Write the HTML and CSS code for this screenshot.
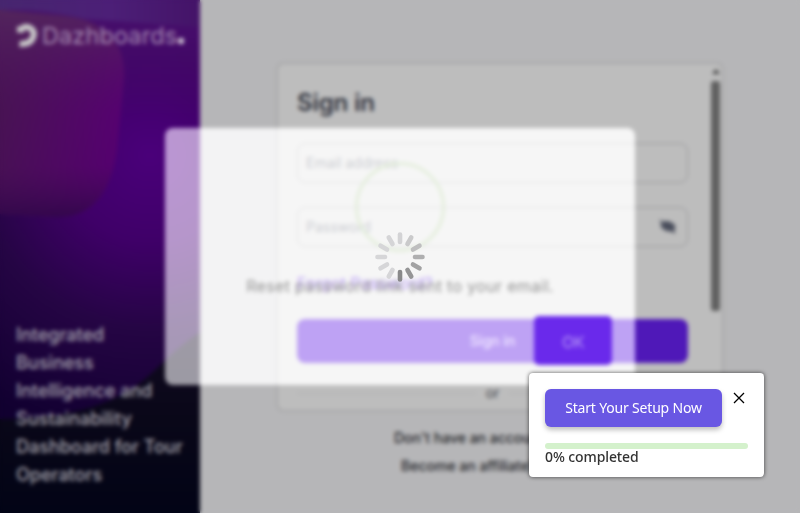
FILE: index.html
```html
<!DOCTYPE html>
<html lang="en">
<head>
<meta charset="utf-8">
<title>Dazhboards</title>
<link rel="stylesheet" href="styles.css">
</head>
<body>
<div class="page">
  <aside class="sidebar">
    <svg class="art" viewBox="0 0 200 513" preserveAspectRatio="none" aria-hidden="true">
      <defs>
        <radialGradient id="glow" gradientUnits="userSpaceOnUse" cx="150" cy="155" r="290">
          <stop offset="0" stop-color="#4a007a"/>
          <stop offset=".3" stop-color="#3f0068"/>
          <stop offset=".6" stop-color="#250544"/>
          <stop offset="1" stop-color="#110030"/>
        </radialGradient>
        <linearGradient id="top" x1="0" y1="0" x2="1" y2="0">
          <stop offset="0" stop-color="#47266f"/><stop offset=".55" stop-color="#4c1f77"/><stop offset="1" stop-color="#441368"/>
        </linearGradient>
        <linearGradient id="topfade" x1="0" y1="0" x2="0" y2="1">
          <stop offset="0" stop-color="#47106c"/><stop offset=".3" stop-color="#450c6a"/><stop offset="1" stop-color="#450868" stop-opacity="0"/>
        </linearGradient>
        <linearGradient id="blob" gradientUnits="userSpaceOnUse" x1="0" y1="90" x2="120" y2="130">
          <stop offset="0" stop-color="#46154f"/><stop offset="1" stop-color="#570072"/>
        </linearGradient>
        <linearGradient id="shade" x1="0" y1="0" x2="0" y2="1">
          <stop offset="0" stop-color="#55285f" stop-opacity=".85"/><stop offset=".5" stop-color="#500b68" stop-opacity=".1"/><stop offset=".75" stop-color="#400c50" stop-opacity=".15"/><stop offset="1" stop-color="#2f0748" stop-opacity=".9"/>
        </linearGradient>
        <linearGradient id="floor" x1="0" y1="0" x2="0" y2="1">
          <stop offset="0" stop-color="#110a20"/><stop offset=".5" stop-color="#090718"/><stop offset="1" stop-color="#020416"/>
        </linearGradient>
      </defs>
      <rect width="200" height="513" fill="url(#glow)"/>
      <rect width="200" height="120" fill="url(#topfade)"/>
      <path d="M0 0H200V27Q130 22 85 19Q40 8 0 10Z" fill="url(#top)"/>
      <path d="M0 10L65 16Q126 24 124 78L117 150Q107 219 55 217L0 214Z" fill="url(#blob)"/>
      <path d="M0 10L65 16Q126 24 124 78L117 150Q107 219 55 217L0 214Z" fill="url(#shade)"/>
      <path d="M0 419Q105 420 155 370Q180 345 200 332V513H0Z" fill="url(#floor)"/>
    </svg>
    <div class="brand">
      <svg class="mark" viewBox="0 0 22 24"><path d="M1 5.500H8" /><path d="M6 4C14 0.500 19.500 7 17.200 13C15.500 18.500 10 20.300 3.500 20"/></svg>
      <span class="name">Dazhboards</span><span class="dot"></span>
    </div>
    <p class="pitch">Integrated<br>Business<br>Intelligence and<br>Sustainability<br>Dashboard for Tour<br>Operators</p>
  </aside>
  <main class="main">
    <section class="card">
      <form class="form">
        <h1>Sign in</h1>
        <div class="field"><span>Email address</span></div>
        <div class="field"><span>Password</span>
          <svg class="eye" viewBox="0 0 18 16"><path d="M3 4Q10 0 17 7L16 12Q8 15 2 8Z"/><path class="slash" d="M1 1.500L17 15"/></svg>
        </div>
        <a class="forgot">Forgot Password?</a>
        <div class="submit">Sign in</div>
        <div class="or"><i></i><span>or</span><i></i></div>
      </form>
      <div class="scroll"><b></b><i></i></div>
    </section>
    <div class="links"><p>Don't have an account?</p><p class="second">Become an affiliate?</p></div>
  </main>
</div>
<div class="layer">
  <div class="dialog">
    <div class="ring"></div>
    <p class="message">Reset password link sent to your email.</p>
    <div class="ok">OK</div>
  </div>
</div>
<div class="veil"></div>
<div class="layer">
  <svg class="spinner" viewBox="-25 -25 50 50">
    <g stroke-width="4.600" stroke-linecap="round">
      <path d="M0-15V-22.500" stroke="#d3d3d5"/>
      <path d="M0-15V-22.500" stroke="#cacacb" transform="rotate(30)"/>
      <path d="M0-15V-22.500" stroke="#bebebf" transform="rotate(60)"/>
      <path d="M0-15V-22.500" stroke="#afafb0" transform="rotate(90)"/>
      <path d="M0-15V-22.500" stroke="#a2a2a3" transform="rotate(120)"/>
      <path d="M0-15V-22.500" stroke="#959596" transform="rotate(150)"/>
      <path d="M0-15V-22.500" stroke="#89898a" transform="rotate(180)"/>
      <path d="M0-15V-22.500" stroke="#d6d6d8" transform="rotate(210)"/>
      <path d="M0-15V-22.500" stroke="#d6d6d8" transform="rotate(240)"/>
      <path d="M0-15V-22.500" stroke="#d6d6d8" transform="rotate(270)"/>
      <path d="M0-15V-22.500" stroke="#d6d6d8" transform="rotate(300)"/>
      <path d="M0-15V-22.500" stroke="#d5d5d7" transform="rotate(330)"/>
    </g>
  </svg>
</div>
<div class="setup">
  <div class="row">
    <div class="start"><span>Start Your Setup Now</span></div>
    <svg class="close" viewBox="0 0 12 12"><path d="M1 1L11 11M11 1L1 11"/></svg>
  </div>
  <div class="bar"></div>
  <p class="done">0% completed</p>
</div>
</body>
</html>
```

FILE: styles.css
```css
* { box-sizing: border-box; }
body { margin: 0; width: 800px; height: 513px; overflow: hidden; font-family: Inter, sans-serif; }
p, h1 { margin: 0; }
.page { display: flex; height: 513px; background: #b6b6b8; }

.sidebar { position: relative; width: 200px; height: 513px; padding: 24px 0 24px 16px; display: flex; flex-direction: column; justify-content: space-between; overflow: hidden; }
.art { position: absolute; inset: 0; width: 200px; height: 513px; }
.brand { position: relative; display: flex; align-items: center; height: 24px; }
.mark { width: 22px; height: 24px; fill: none; stroke: #cacaca; stroke-width: 6; }
.name { margin-left: 4px; width: 136px; font-size: 23.500px; line-height: 24px; color: #a58bb2; letter-spacing: .1px; white-space: nowrap; }
.dot { width: 6px; height: 6px; border-radius: 2px; background: #cfc6d4; margin-top: 10px; }
.pitch { position: relative; font-size: 18px; line-height: 28px; font-weight: 500; color: #a9a6b0; white-space: nowrap; }

.main { flex: 1; padding: 62px 0 0 76px; }
.card { display: flex; width: 448px; height: 350px; border: 2px solid #a8a8aa; border-radius: 8px; background: #bdbdbd; }
.form { flex: 1; padding: 23px 21px 0 19px; display: flex; flex-direction: column; }
h1 { font-size: 24px; line-height: 32px; font-weight: 600; color: #2f323c; letter-spacing: -.1px; margin-bottom: 24px; }
.field { display: flex; align-items: center; justify-content: space-between; height: 40px; margin-bottom: 24px; padding: 0 11px 2px 8px; border: 1px solid #98989b; border-radius: 8px; font-size: 14px; color: #666a73; }
.eye { width: 17px; height: 15px; fill: #4a4e5c; stroke: #4a4e5c; }
.eye .slash { stroke-width: 2; }
.forgot { font-size: 16px; line-height: 20px; margin: 2px 0 26px; font-weight: 400; color: #4a14bc; }
.submit { display: flex; align-items: center; justify-content: center; height: 44px; padding-bottom: 1px; border-radius: 8px; background: #4f18b8; color: #b5a4d8; font-size: 14px; font-weight: 500; }
.or { display: flex; align-items: center; gap: 10px; margin-top: 20px; font-size: 14px; line-height: 20px; color: #44464c; }
.or i { flex: 1; height: 1px; background: #aeaeb0; }
.scroll { width: 13px; padding-top: 5px; display: flex; flex-direction: column; align-items: center; }
.scroll b { border: 4px solid transparent; border-top: 0; border-bottom: 5px solid #444; }
.scroll i { width: 9px; height: 230px; margin-top: 7px; border-radius: 3px; background: #606060; }
.links { margin: 16px 0 0 118px; font-size: 14px; line-height: 20px; font-weight: 500; color: #222327; white-space: nowrap; }
.second { margin: 8px 0 0 7px; }

.layer { position: absolute; inset: 0; display: flex; align-items: center; justify-content: center; }
.dialog { width: 470px; height: 257px; border-radius: 8px; background: rgba(255, 255, 255, .59); backdrop-filter: brightness(1.24); display: flex; flex-direction: column; align-items: center; }
.ring { width: 90px; height: 90px; margin-top: 34px; border: 3px solid #e4eedc; border-radius: 50%; }
.message { margin-top: 22px; font-size: 16px; line-height: 24px; letter-spacing: .33px; color: #929292; white-space: nowrap; }
.ok { align-self: flex-end; display: flex; align-items: center; justify-content: center; width: 78px; height: 49px; margin: 18px 23px 0 0; padding-top: 2px; border-radius: 5px; background: #6a29eb; color: #b89af6; font-size: 16px; letter-spacing: -.6px; }
.veil { position: absolute; inset: 0; backdrop-filter: blur(2px); }
.spinner { width: 50px; height: 50px; margin-top: 1px; }

.setup { position: absolute; left: 529px; top: 373px; width: 235px; height: 104px; padding: 16px; border-radius: 4px; background: #fff; box-shadow: 0 0 4px rgba(0, 0, 0, .65); font-family: "Noto Sans", sans-serif; }
.row { display: flex; justify-content: space-between; }
.start { display: flex; align-items: center; justify-content: center; width: 177px; height: 38px; padding-bottom: 1px; border-radius: 6px; background: #6957e3; color: #fff; font-size: 14px; letter-spacing: -.18px; white-space: nowrap; box-shadow: 0 3px 5px rgba(0, 0, 0, .25); }
.close { width: 12px; height: 12px; margin: 3px 3px 0 0; fill: none; stroke: #000; stroke-width: 1.300; }
.bar { height: 6px; margin-top: 16px; border-radius: 3px; background: #d4f1cc; }
.done { font-size: 14px; line-height: 16px; font-weight: 500; color: #333; letter-spacing: -.1px; }
```
